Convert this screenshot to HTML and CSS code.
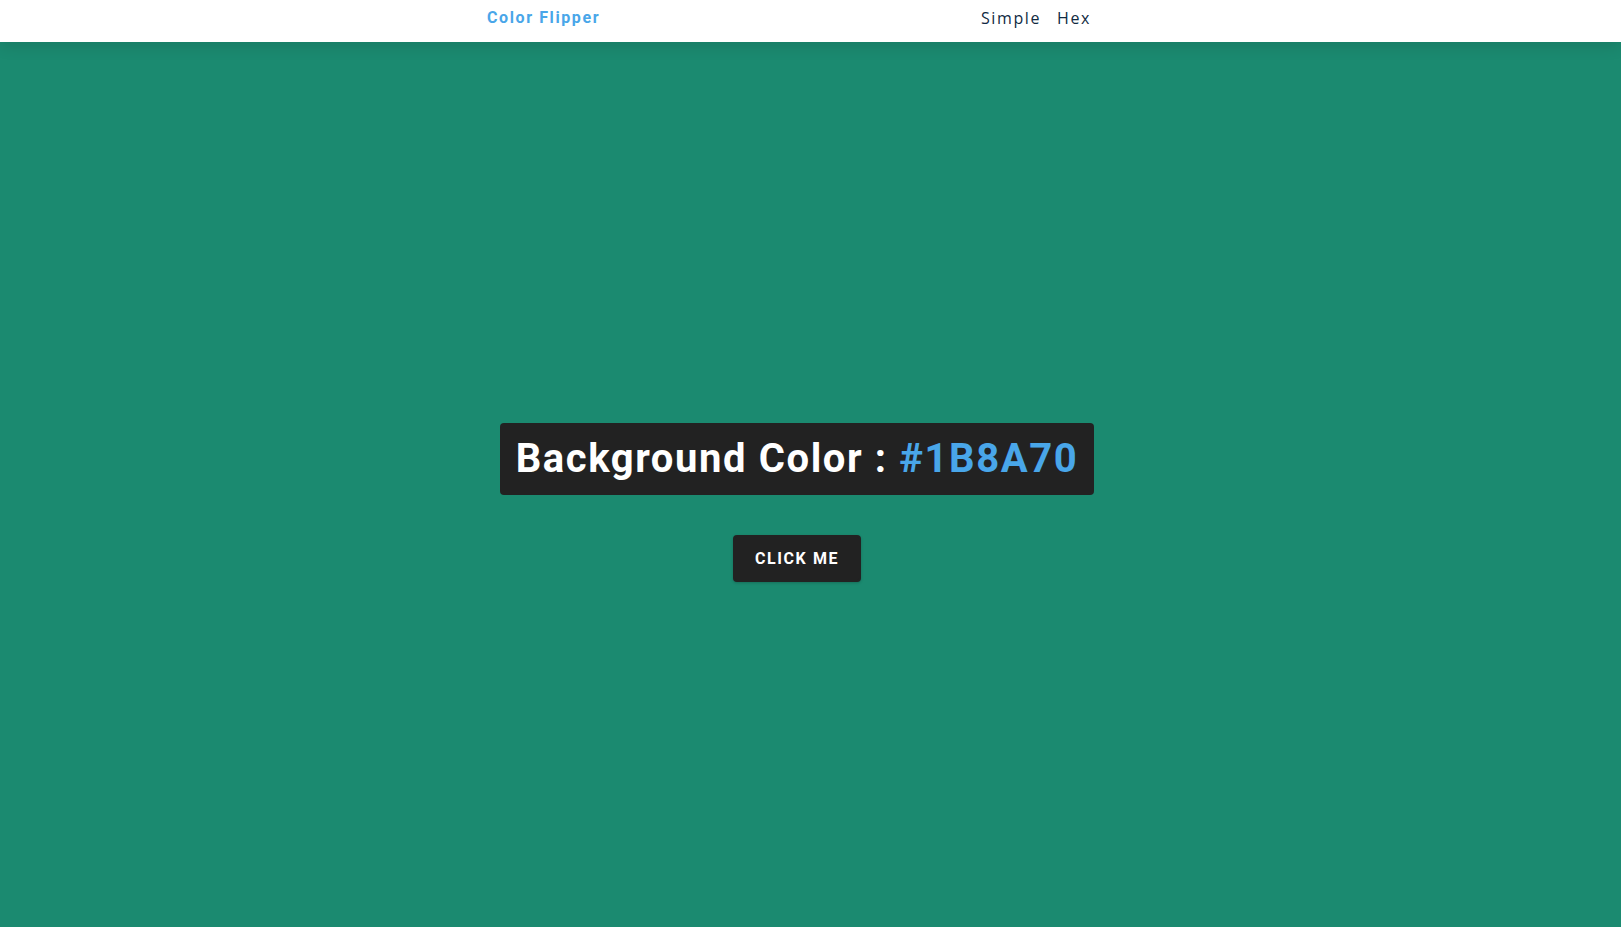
FILE: index.html
```html
<!DOCTYPE html>
<html lang="en">
<head>
<meta charset="utf-8">
<title>Color Flipper</title>
<link rel="stylesheet" href="styles.css">
</head>
<body>
<nav class="nav">
  <div class="nav-center">
    <h4 class="brand">Color Flipper</h4>
    <ul class="nav-links">
      <li><a href="#">Simple</a></li>
      <li><a href="#">Hex</a></li>
    </ul>
  </div>
</nav>
<main class="main">
  <div class="container">
    <h2 class="color-title">Background Color : <span class="color">#1B8A70</span></h2>
    <button class="btn btn-hero" type="button">Click Me</button>
  </div>
</main>
</body>
</html>
```
FILE: styles.css
```css
* {
  box-sizing: border-box;
  margin: 0;
  padding: 0;
}

html, body {
  height: 100%;
  overflow: hidden;
}

body {
  font-family: "Open Sans", "Liberation Sans", sans-serif;
  background: #1b8a70;
  color: #102a42;
  line-height: 1.5;
  font-size: 16px;
}

.nav {
  position: relative;
  z-index: 2;
  background: #fff;
  height: 42px;
  padding-right: 27px;
  box-shadow: 0 5px 15px rgba(0, 0, 0, 0.1);
}

.nav-center {
  max-width: 620px;
  height: 100%;
  margin: 0 auto;
  padding-bottom: 6px;
  display: flex;
  align-items: center;
  justify-content: space-between;
}

.brand {
  font-family: Roboto, "Liberation Sans", sans-serif;
  font-size: 16px;
  font-weight: 700;
  line-height: 1;
  letter-spacing: 1.6px;
  color: #49a6e9;
}

.nav-links {
  list-style: none;
  display: flex;
}

.nav-links a {
  display: block;
  text-decoration: none;
  color: #102a42;
  font-size: 16px;
  line-height: 24px;
  letter-spacing: 1.6px;
  margin-right: 16px;
}

.main {
  min-height: 100vh;
  padding-right: 27px;
  padding-bottom: 6px;
  display: flex;
  align-items: center;
  justify-content: center;
}

.container {
  display: flex;
  flex-direction: column;
  align-items: center;
}

.color-title {
  font-family: Roboto, "Liberation Sans", sans-serif;
  font-size: 40px;
  font-weight: 700;
  line-height: 1;
  letter-spacing: 1.6px;
  color: #fff;
  background: #222222;
  padding: 16px;
  border-radius: 4px;
  margin-bottom: 40px;
}

.color {
  color: #49a6e9;
}

.btn-hero {
  font-family: Roboto, "Liberation Sans", sans-serif;
  font-size: 16px;
  font-weight: 700;
  line-height: normal;
  letter-spacing: 1.6px;
  text-transform: uppercase;
  color: #fff;
  background: #222222;
  border: 2px solid #222222;
  border-radius: 4px;
  padding: 12px 20px;
  cursor: pointer;
  box-shadow: 0 1px 3px rgba(0, 0, 0, 0.2);
}
```
